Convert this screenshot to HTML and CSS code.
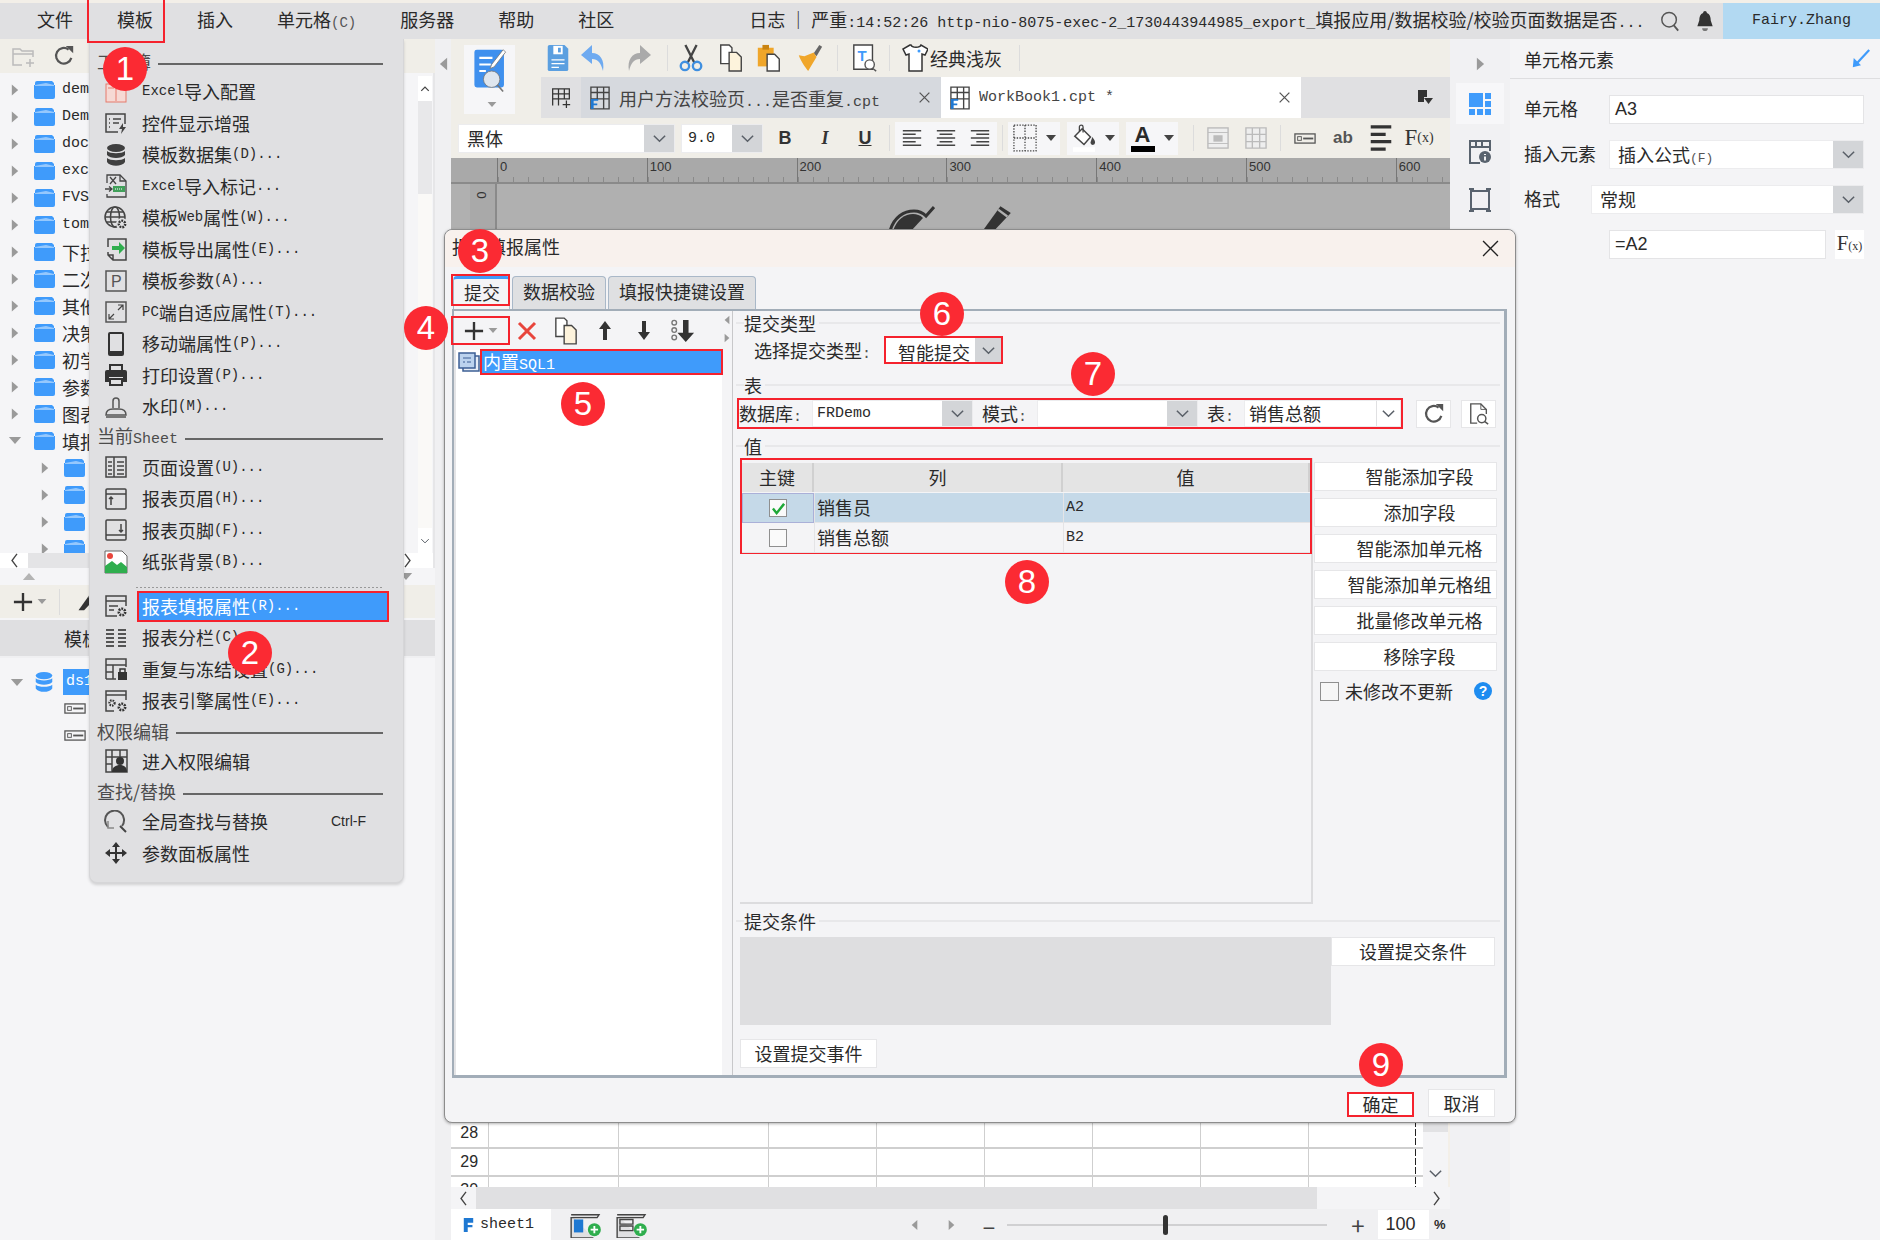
FILE: index.html
```html
<!DOCTYPE html>
<html lang="zh-CN">
<head>
	<meta charset="UTF-8">
	<title>报表填报属性</title>
	<link rel="stylesheet" href="styles.css">
</head>
<body>

<svg class="sprite" xmlns="http://www.w3.org/2000/svg">
	<symbol id="chev" viewBox="0 0 16 16"><path d="M2 5l6 6 6-6" fill="none" stroke="#5a6068" stroke-width="1.6"/></symbol>
	<symbol id="chev-u" viewBox="0 0 16 16"><path d="M2 11l6-6 6 6" fill="none" stroke="#444" stroke-width="2"/></symbol>
	<symbol id="chev-l" viewBox="0 0 10 18"><path d="M8 1L2 9l6 8" fill="none" stroke="#444" stroke-width="1.6"/></symbol>
	<symbol id="chev-r" viewBox="0 0 10 18"><path d="M2 1l6 8-6 8" fill="none" stroke="#444" stroke-width="1.6"/></symbol>
	<symbol id="tri-r" viewBox="0 0 10 16"><path d="M1 1l8 7-8 7z" fill="#9a9a9a"/></symbol>
	<symbol id="tri-l" viewBox="0 0 10 16"><path d="M9 1L1 8l8 7z" fill="#9a9a9a"/></symbol>
	<symbol id="tri-d" viewBox="0 0 16 10"><path d="M1 1l7 8 7-8z" fill="#9a9a9a"/></symbol>
	<symbol id="tri-u" viewBox="0 0 16 10"><path d="M1 9l7-8 7 8z" fill="#b4b4b4"/></symbol>
	<symbol id="folder" viewBox="0 0 21 19"><path d="M1 3q0-2 2-2h15l2 2v2H1z" fill="#3f9bfb"/><path d="M0 5h21v12q0 2-2 2H2q-2 0-2-2z" fill="#3f9bfb"/><path d="M12 3l8 2v1H1V5z" fill="#fff" opacity=".45"/></symbol>
	<symbol id="db" viewBox="0 0 24 24"><g fill="#3f3f3f"><ellipse cx="12" cy="5" rx="9" ry="4"/><path d="M3 8c3 3 15 3 18 0v4c-3 4-15 4-18 0z"/><path d="M3 15c3 3 15 3 18 0v4c-3 5-15 5-18 0z"/></g></symbol>
	<symbol id="db-blue" viewBox="0 0 24 24"><g fill="#3f9bfb"><ellipse cx="12" cy="5" rx="9" ry="4"/><path d="M3 8c3 3 15 3 18 0v4c-3 4-15 4-18 0z"/><path d="M3 15c3 3 15 3 18 0v4c-3 5-15 5-18 0z"/></g></symbol>
	<symbol id="excel-cfg" viewBox="0 0 24 24"><rect x="2" y="4" width="20" height="18" fill="#f6d9d4" stroke="#e57b6d"/><path d="M12 7v14M4 8h6M14 8h6" stroke="#e57b6d"/></symbol>
	<symbol id="ctrl" viewBox="0 0 24 24"><g fill="none" stroke="#444" stroke-width="1.5"><path d="M21 13V3H2v18h12"/><path d="M5 8h1M9 8h8M5 12h1M9 12h6M5 16h1"/></g><path d="M19 12l-4 6h3l-1 5 5-7h-3z" fill="#444"/></symbol>
	<symbol id="xls" viewBox="0 0 24 24"><g fill="none" stroke="#444" stroke-width="1.3"><path d="M3 9V1h13l6 6v16H3v-3"/><path d="M6 3l6 7M12 3l-6 7M16 1v6h6"/><path d="M1 15h6M5 12.500l3 2.500-3 2.500"/></g><rect x="9" y="12" width="12" height="6" fill="#41a05a"/><path d="M11 15h8" stroke="#fff" stroke-dasharray="1 1"/></symbol>
	<symbol id="web" viewBox="0 0 24 24"><g fill="none" stroke="#444" stroke-width="1.500"><circle cx="11" cy="11" r="10"/><ellipse cx="11" cy="11" rx="4.500" ry="10"/><path d="M1 11h20M2 6h18M2 16h18"/></g><circle cx="18" cy="18" r="6" fill="#e0e0e2"/><circle cx="18" cy="18" r="3.200" fill="none" stroke="#333" stroke-width="2.400" stroke-dasharray="1.800 1"/></symbol>
	<symbol id="export" viewBox="0 0 24 24"><path d="M4 10V2h18v21H9l-5-5v-3M9 23v-5H4" fill="none" stroke="#444" stroke-width="1.500"/><path d="M8 9h7V5l6 6-6 6v-4H8z" fill="#2fae4e"/></symbol>
	<symbol id="pbox" viewBox="0 0 24 24"><rect x="2" y="2" width="20" height="20" fill="none" stroke="#555" stroke-width="1.500"/><text x="7" y="18" class="svg-t">P</text></symbol>
	<symbol id="fit" viewBox="0 0 24 24"><rect x="2" y="2" width="20" height="20" fill="none" stroke="#555" stroke-width="1.500"/><path d="M14 5h5v5M19 5l-5 5M5 14v5h5M5 19l5-5" fill="none" stroke="#444" stroke-width="1.200"/></symbol>
	<symbol id="phone" viewBox="0 0 24 24"><rect x="5" y="1" width="14" height="22" rx="1" fill="none" stroke="#333" stroke-width="2"/><path d="M5 19h14v4H5z" fill="#333"/></symbol>
	<symbol id="print" viewBox="0 0 24 24"><path d="M6 7V2h12v5" fill="none" stroke="#333" stroke-width="2"/><path d="M1 9q0-2 2-2h18q2 0 2 2v10h-4v-5H5v5H1z" fill="#333"/><path d="M6 16h12v6H6z" fill="none" stroke="#333" stroke-width="2"/></symbol>
	<symbol id="stamp" viewBox="0 0 24 24"><g fill="none" stroke="#555" stroke-width="1.500"><path d="M9 13V6a3 3 0 1 1 6 0v7"/><path d="M2 20c0-5 3-6 7-6h6c4 0 7 1 7 6z"/></g><path d="M2 22h20" stroke="#777" stroke-width="2"/></symbol>
	<symbol id="pagecols" viewBox="0 0 24 24"><g fill="none" stroke="#444" stroke-width="1.500"><rect x="2" y="2" width="20" height="20"/><path d="M10 2v20M4 7h4M4 11h4M4 15h4M4 19h4M13 7h7M13 11h7M13 15h7M13 19h7"/></g></symbol>
	<symbol id="head" viewBox="0 0 24 24"><g fill="none" stroke="#444" stroke-width="1.500"><rect x="2" y="2" width="20" height="20" rx="1"/><path d="M2 7h20M7 18v-8M5 12l2-2 2 2"/></g></symbol>
	<symbol id="foot" viewBox="0 0 24 24"><g fill="none" stroke="#444" stroke-width="1.500"><rect x="2" y="2" width="20" height="20" rx="1"/><path d="M2 17h20M17 6v8M15 12l2 2 2-2"/></g></symbol>
	<symbol id="paper" viewBox="0 0 24 24"><path d="M1 1h17l5 5v17H1z" fill="#fff" stroke="#666"/><circle cx="6" cy="6" r="3" fill="#e8453c"/><path d="M1 23v-7l7-5 5 4 4-3 6 5v6z" fill="#2fae4e"/></symbol>
	<symbol id="fill" viewBox="0 0 24 24"><g fill="none" stroke="#444" stroke-width="1.500"><path d="M22 12V2H2v20h11M2 7h20M5 12h9M5 16h5"/></g><circle cx="18" cy="18" r="3.200" fill="none" stroke="#333" stroke-width="2.600" stroke-dasharray="1.800 1"/></symbol>
	<symbol id="cols" viewBox="0 0 24 24"><path d="M2 4h8M14 4h8M2 8h8M14 8h8M2 12h8M14 12h8M2 16h8M14 16h8M2 20h8M14 20h8" stroke="#555" stroke-width="1.800"/></symbol>
	<symbol id="freeze" viewBox="0 0 24 24"><g fill="none" stroke="#444" stroke-width="1.500"><path d="M2 22V2h20v8M2 8h20M9 8v14M2 22h10M2 15h7"/></g><rect x="14" y="15" width="9" height="8" fill="#333"/><path d="M16 15v-3h5v3" fill="none" stroke="#333" stroke-width="1.500"/></symbol>
	<symbol id="engine" viewBox="0 0 24 24"><g fill="none" stroke="#444" stroke-width="1.500"><path d="M22 11V2H2v20h8M2 6h20"/></g><circle cx="8" cy="14" r="2.600" fill="none" stroke="#333" stroke-width="2.200" stroke-dasharray="1.500 1"/><circle cx="18" cy="18" r="3.200" fill="none" stroke="#333" stroke-width="2.600" stroke-dasharray="1.800 1"/></symbol>
	<symbol id="perm" viewBox="0 0 24 24"><g fill="none" stroke="#444" stroke-width="1.500"><path d="M2 23V1h21v22zM2 8h21M2 15h6M8 1v22M16 1v7"/></g><circle cx="16" cy="12" r="4" fill="#333"/><path d="M8 23c0-5 4-7 8-7s7 2 7 7z" fill="#333"/></symbol>
	<symbol id="findrep" viewBox="0 0 24 24"><g fill="none" stroke-width="2"><path d="M4 17A9.500 9.500 0 1 1 18 16" stroke="#555"/><path d="M16 16l6 6" stroke="#444"/></g><path d="M4 11v7h6" fill="none" stroke="#888" stroke-width="1.500"/></symbol>
	<symbol id="move" viewBox="0 0 24 24"><path d="M12 1l4 5h-3v5h5V8l5 4-5 4v-3h-5v5h3l-4 5-4-5h3v-5H6v3l-5-4 5-4v3h5V6H8z" fill="#333"/></symbol>
	<symbol id="save" viewBox="0 0 24 30"><path d="M1 3q0-2 2-2h16l4 4v22q0 2-2 2H3q-2 0-2-2z" fill="#5b9fe0"/><rect x="7" y="2" width="10" height="9" fill="#fff"/><rect x="12" y="4" width="3" height="5" fill="#5b9fe0"/><path d="M5 17h14M5 21h14M5 25h8" stroke="#fff" stroke-width="1.500"/></symbol>
	<symbol id="undo" viewBox="0 0 26 28"><path d="M12 1L1 11l11 9v-5c6 0 9 4 11 12 2-11-3-18-11-18z" fill="#6eaaf0"/></symbol>
	<symbol id="redo" viewBox="0 0 26 28"><path d="M14 1l11 10-11 9v-5C8 15 5 19 3 27 1 16 6 9 14 9z" fill="#aaa"/></symbol>
	<symbol id="cut" viewBox="0 0 26 30"><path d="M7 1l10 20M19 1L9 21" stroke="#444" stroke-width="2.500"/><circle cx="6.500" cy="23.500" r="4.500" fill="none" stroke="#3f8fe0" stroke-width="2.500"/><circle cx="19.500" cy="23.500" r="4.500" fill="none" stroke="#3f8fe0" stroke-width="2.500"/></symbol>
	<symbol id="copy" viewBox="0 0 26 30"><path d="M2 1h9l3 3v17H2z" fill="#fff" stroke="#444" stroke-width="1.500"/><path d="M11 9h8l5 5v15H11z" fill="#fdf3dc" stroke="#444" stroke-width="1.500"/></symbol>
	<symbol id="paste" viewBox="0 0 26 30"><path d="M1 4h17v20H1z" fill="#f0a62a"/><rect x="6" y="1" width="7" height="5" fill="#c98310"/><path d="M11 11h8l5 5v13H11z" fill="#fff" stroke="#444" stroke-width="1.500"/></symbol>
	<symbol id="brush" viewBox="0 0 26 30"><path d="M17 10l6-9 3 2-6 10z" fill="#666"/><path d="M1 12l6 1 10-4 3 5-9 15C8 25 3 18 1 12z" fill="#f0a62a"/></symbol>
	<symbol id="tprev" viewBox="0 0 26 30"><path d="M1 1h20v26H1z" fill="#fff" stroke="#444" stroke-width="1.500"/><text x="5" y="18" class="svg-t blue">T</text><circle cx="18" cy="22" r="5" fill="#fff" stroke="#555" stroke-width="1.500"/><path d="M21 26l4 3" stroke="#555" stroke-width="1.500"/></symbol>
	<symbol id="shirt" viewBox="0 0 26 28"><path d="M8 1L1 5l3 6 3-1v17h13V10l3 1 3-6-7-4c-1 3-9 3-10 0z" fill="#fff" stroke="#333" stroke-width="1.500"/><circle cx="17" cy="7" r="1.500" fill="#3f9bfb"/></symbol>
	<symbol id="addsheet" viewBox="0 0 24 26"><path d="M2 22V2h20v12H2M9 2v20M16 2v12M2 8h20" fill="none" stroke="#333" stroke-width="1.500"/><path d="M14 21h9M18.500 16v9" stroke="#333" stroke-width="1.500"/></symbol>
	<symbol id="report" viewBox="0 0 22 26"><path d="M1 1h20v24H1zM1 7h20M1 14h20M8 1v13M15 1v24" fill="none" stroke="#444" stroke-width="1.500"/><path d="M1 14h8v2H4v3h4v2H4v4H1z" fill="#1e78d2"/></symbol>
	<symbol id="x" viewBox="0 0 16 16"><path d="M2 2l12 12M14 2L2 14" stroke="#555" stroke-width="1.600"/></symbol>
	<symbol id="x-dark" viewBox="0 0 16 16"><path d="M1 1l14 14M15 1L1 15" stroke="#222" stroke-width="1.300"/></symbol>
	<symbol id="pin" viewBox="0 0 18 18"><path d="M2 1h9v7H8v5H2z" fill="#333"/><path d="M8 9h9l-4.500 6z" fill="#333"/></symbol>
	<symbol id="bordergrid" viewBox="0 0 26 30"><path d="M1 1h24v28H1zM13 1v28M1 15h24" fill="none" stroke="#444" stroke-width="1.400" stroke-dasharray="1.500 1.500"/></symbol>
	<symbol id="bucket" viewBox="0 0 26 30"><path d="M3 13L11 5l9 9-7 8z" fill="#fff" stroke="#444" stroke-width="1.600"/><path d="M8 8V3a2 2 0 0 1 4 0v6" fill="none" stroke="#444" stroke-width="1.400"/><path d="M22 14c2 3 3 4 3 6a2.500 2.500 0 0 1-5 0z" fill="#444"/><rect x="1" y="25" width="24" height="5" fill="#fff"/></symbol>
	<symbol id="align-l" viewBox="0 0 24 24"><path d="M2 4h20M2 8h14M2 12h20M2 16h14M2 20h20" stroke="#444" stroke-width="1.600"/></symbol>
	<symbol id="align-c" viewBox="0 0 24 24"><path d="M2 4h20M5 8h14M2 12h20M5 16h14M2 20h20" stroke="#444" stroke-width="1.600"/></symbol>
	<symbol id="align-r" viewBox="0 0 24 24"><path d="M2 4h20M8 8h14M2 12h20M8 16h14M2 20h20" stroke="#444" stroke-width="1.600"/></symbol>
	<symbol id="merge" viewBox="0 0 24 24"><rect x="1" y="1" width="22" height="22" fill="#eee" stroke="#bbb" stroke-width="1.500"/><path d="M1 6h22M1 18h22" stroke="#bbb"/><rect x="7" y="9" width="10" height="7" fill="#bbb"/></symbol>
	<symbol id="gridoff" viewBox="0 0 24 24"><path d="M1 1h22v22H1zM1 8h22M1 16h22M8 1v22M16 1v22" fill="#eee" stroke="#bbb" stroke-width="1.500"/></symbol>
	<symbol id="field" viewBox="0 0 24 12"><rect x="1" y="1" width="22" height="10" fill="none" stroke="#555" stroke-width="1.400"/><rect x="4" y="4" width="4" height="4" fill="none" stroke="#555"/><path d="M10 6h11" stroke="#555" stroke-width="2"/></symbol>
	<symbol id="lines" viewBox="0 0 24 30"><path d="M1 3h22M1 11h16M1 19h22M1 27h16" stroke="#333" stroke-width="3.500"/></symbol>
	<symbol id="plus" viewBox="0 0 22 22"><path d="M11 1v20M1 11h20" stroke="#333" stroke-width="2.600"/></symbol>
	<symbol id="del" viewBox="0 0 20 20"><path d="M2 2l16 16M18 2L2 18" stroke="#e8453c" stroke-width="3"/></symbol>
	<symbol id="up" viewBox="0 0 14 21"><path d="M7 1l6 8H9v11H5V9H1z" fill="#333"/></symbol>
	<symbol id="down" viewBox="0 0 14 21"><path d="M7 20l6-8H9V1H5v11H1z" fill="#333"/></symbol>
	<symbol id="bottom" viewBox="0 0 26 26"><circle cx="3.500" cy="4" r="2.500" fill="none" stroke="#777" stroke-width="1.500"/><circle cx="3.500" cy="12" r="2.500" fill="none" stroke="#777" stroke-width="1.500"/><circle cx="3.500" cy="20" r="2.500" fill="none" stroke="#777" stroke-width="1.500"/><path d="M16 25l9-10h-6V1h-6v14H7z" fill="#333"/></symbol>
	<symbol id="sqlitem" viewBox="0 0 22 22"><rect x="5" y="5" width="16" height="15" fill="#e8eef6" stroke="#3c5f95" stroke-width="1.500"/><rect x="1" y="2" width="16" height="15" fill="#bcd3ee" stroke="#3c5f95" stroke-width="1.500"/><path d="M5 7h8M5 11h2M9 11h4" stroke="#3c5f95"/></symbol>
	<symbol id="refresh" viewBox="0 0 24 24"><path d="M20 14A8.500 8.500 0 1 1 17 5" fill="none" stroke="#555" stroke-width="2.400"/><path d="M14 1h8v8z" fill="#555"/></symbol>
	<symbol id="docsearch" viewBox="0 0 24 24"><path d="M10 22H3V1h11l6 6v5" fill="none" stroke="#555" stroke-width="1.500"/><path d="M14 1v6h6" fill="none" stroke="#555"/><circle cx="15" cy="17" r="4.500" fill="none" stroke="#555" stroke-width="1.600"/><path d="M18 20l4 3" stroke="#555" stroke-width="1.600"/></symbol>
	<symbol id="check" viewBox="0 0 14 14"><path d="M1 7l4 5 8-10" fill="none" stroke="#1ea838" stroke-width="2.600"/></symbol>
	<symbol id="search" viewBox="0 0 22 24"><circle cx="10" cy="10" r="8" fill="none" stroke="#555" stroke-width="1.600"/><path d="M15 16l5 6" stroke="#555" stroke-width="2"/></symbol>
	<symbol id="bell" viewBox="0 0 18 24"><path d="M9 1c1 0 2 1 2 2 3 1 4 4 4 8l2 6H1l2-6c0-4 1-7 4-8 0-1 1-2 2-2z" fill="#333"/><path d="M6 19h6c0 4-6 4-6 0z" fill="#777"/></symbol>
	<symbol id="pane-cell" viewBox="0 0 24 24"><path d="M1 1h14v14H1zM17 1h6v6h-6zM17 9h6v6h-6zM1 17h6v6H1zM9 17h6v6H9zM17 17h6v6h-6z" fill="#3f9bfb"/></symbol>
	<symbol id="pane-info" viewBox="0 0 24 24"><path d="M12 23H2V1h20v10M2 7h20M8 1v6M14 1v6" fill="none" stroke="#59636e" stroke-width="2"/><circle cx="17" cy="17" r="6" fill="#59636e"/><path d="M17 14v1M17 16.500v4" stroke="#fff" stroke-width="1.800"/></symbol>
	<symbol id="pane-border" viewBox="0 0 24 24"><rect x="3" y="3" width="18" height="18" fill="none" stroke="#59636e" stroke-width="2"/><path d="M1 1h5M18 1h5M1 23h5M18 23h5" stroke="#59636e" stroke-width="2"/></symbol>
	<symbol id="dock" viewBox="0 0 22 22"><path d="M20 1L7 15" stroke="#3f9bfb" stroke-width="2.400"/><path d="M2 20l1-10 8 8z" fill="#3f9bfb"/></symbol>
	<symbol id="pen" viewBox="0 0 40 56"><rect x="1" y="2" width="36" height="46" rx="3" fill="#3f90ee"/><path d="M7 12h16M7 20h14M7 28h8" stroke="#fff" stroke-width="2.500"/><path d="M36 2l3 3-14 18-5 2 2-5z" fill="#fff" stroke="#777"/><circle cx="22" cy="38" r="10" fill="#dfe6ee" stroke="#777"/><path d="M29 45l7 8" stroke="#777" stroke-width="2"/></symbol>
	<symbol id="sheet-add" viewBox="0 0 34 28"><path d="M1 3h30l-2 3H1v22h24" fill="#e0e0e2" stroke="#444" stroke-width="1.500"/><path d="M4 8h10v14H4z" fill="#1e78d2"/><circle cx="26" cy="19" r="7" fill="#2fae4e"/><path d="M26 15v8M22 19h8" stroke="#fff" stroke-width="2"/></symbol>
	<symbol id="grid-add" viewBox="0 0 34 28"><path d="M1 3h30l-2 3H1v22h24" fill="#e0e0e2" stroke="#444" stroke-width="1.500"/><path d="M4 8h14v5H4zM4 15h14v5H4z" fill="none" stroke="#444" stroke-width="1.500"/><circle cx="26" cy="19" r="7" fill="#2fae4e"/><path d="M26 15v8M22 19h8" stroke="#fff" stroke-width="2"/></symbol>
	<symbol id="tab-f" viewBox="0 0 14 20"><path d="M1 1h12v6H6v3h6v3H6v6H1z" fill="#1e78d2"/></symbol>
	<symbol id="eyeoff" viewBox="0 0 46 26"><path d="M1 26C5 12 15 6 25 6c5 0 9 2 12 5L45 2" fill="none" stroke="#333" stroke-width="3"/><path d="M4 26C8 14 16 9 24 9c4 0 7 1 10 4L22 26z" fill="#333"/></symbol>
	<symbol id="pencil" viewBox="0 0 32 26"><path d="M22 1l9 6-18 19H4z" fill="#333"/><path d="M20 4l8 6" stroke="#b0b0b0" stroke-width="2"/></symbol>
</svg>

<div class="app">

	<header class="topbar">
		<nav class="mainmenu">
			<span>文件</span>
			<span class="cur">模板</span>
			<span>插入</span>
			<span>单元格<i class="en pale">(C)</i></span>
			<span>服务器</span>
			<span>帮助</span>
			<span>社区</span>
		</nav>
		<div class="logline">日志 ｜ 严重<i class="en">:14:52:26 http-nio-8075-exec-2_1730443944985_export_</i>填报应用/数据校验/校验页面数据是否<i class="en">...</i></div>
		<svg class="top-search"><use href="#search"/></svg>
		<svg class="top-bell"><use href="#bell"/></svg>
		<div class="user en">Fairy.Zhang</div>
	</header>

	<div class="main">

		<aside class="left">
			<div class="strip34">
				<svg class="i-newdir" viewBox="0 0 24 22"><path d="M10 20H1V4h7l2 2h11v6M1 9h20M18 14v8M14 18h8" fill="none" stroke="#bbb" stroke-width="1.500"/></svg>
				<svg class="i22"><use href="#refresh"/></svg>
			</div>
			<div class="tree">
				<ul class="tree-list">
					<li><svg class="t-arrow"><use href="#tri-r"/></svg><svg class="t-dir"><use href="#folder"/></svg><span class="en">dem</span></li>
					<li><svg class="t-arrow"><use href="#tri-r"/></svg><svg class="t-dir"><use href="#folder"/></svg><span class="en">Dem</span></li>
					<li><svg class="t-arrow"><use href="#tri-r"/></svg><svg class="t-dir"><use href="#folder"/></svg><span class="en">doc</span></li>
					<li><svg class="t-arrow"><use href="#tri-r"/></svg><svg class="t-dir"><use href="#folder"/></svg><span class="en">exc</span></li>
					<li><svg class="t-arrow"><use href="#tri-r"/></svg><svg class="t-dir"><use href="#folder"/></svg><span class="en">FVS</span></li>
					<li><svg class="t-arrow"><use href="#tri-r"/></svg><svg class="t-dir"><use href="#folder"/></svg><span class="en">tom</span></li>
					<li><svg class="t-arrow"><use href="#tri-r"/></svg><svg class="t-dir"><use href="#folder"/></svg><span>下拉</span></li>
					<li><svg class="t-arrow"><use href="#tri-r"/></svg><svg class="t-dir"><use href="#folder"/></svg><span>二次</span></li>
					<li><svg class="t-arrow"><use href="#tri-r"/></svg><svg class="t-dir"><use href="#folder"/></svg><span>其他</span></li>
					<li><svg class="t-arrow"><use href="#tri-r"/></svg><svg class="t-dir"><use href="#folder"/></svg><span>决策</span></li>
					<li><svg class="t-arrow"><use href="#tri-r"/></svg><svg class="t-dir"><use href="#folder"/></svg><span>初学</span></li>
					<li><svg class="t-arrow"><use href="#tri-r"/></svg><svg class="t-dir"><use href="#folder"/></svg><span>参数</span></li>
					<li><svg class="t-arrow"><use href="#tri-r"/></svg><svg class="t-dir"><use href="#folder"/></svg><span>图表</span></li>
					<li><svg class="t-arrow down"><use href="#tri-d"/></svg><svg class="t-dir"><use href="#folder"/></svg><span>填报</span></li>
					<li class="sub"><svg class="t-arrow"><use href="#tri-r"/></svg><svg class="t-dir"><use href="#folder"/></svg></li>
					<li class="sub"><svg class="t-arrow"><use href="#tri-r"/></svg><svg class="t-dir"><use href="#folder"/></svg></li>
					<li class="sub"><svg class="t-arrow"><use href="#tri-r"/></svg><svg class="t-dir"><use href="#folder"/></svg></li>
					<li class="sub"><svg class="t-arrow"><use href="#tri-r"/></svg><svg class="t-dir"><use href="#folder"/></svg></li>
				</ul>
				<div class="tree-vs">
					<div class="vs-btn"><svg class="i-vs"><use href="#chev-u"/></svg></div>
					<div class="vs-thumb"></div>
					<div class="vs-track"></div>
					<div class="vs-btn"><svg class="i-vs"><use href="#chev"/></svg></div>
				</div>
			</div>
			<div class="tree-hs"><span class="hs-btn"><svg class="i-hs"><use href="#chev-l"/></svg></span><span class="hs-bar"></span><span class="hs-btn wide"><svg class="i-hs"><use href="#chev-r"/></svg></span></div>
			<div class="left-split"><svg class="tri-sm"><use href="#tri-u"/></svg><svg class="tri-sm"><use href="#tri-d"/></svg></div>
			<div class="strip33">
				<svg class="i20"><use href="#plus"/></svg><svg class="tri-xs"><use href="#tri-d"/></svg><i class="v-sep"></i>
				<svg class="i20"><use href="#pencil"/></svg>
			</div>
			<div class="left-head">模板数据集</div>
			<div class="dstree">
				<div class="ds-row"><svg class="t-arrow down"><use href="#tri-d"/></svg><svg class="i22"><use href="#db-blue"/></svg><span class="ds-name en">ds1</span></div>
				<div class="ds-child"><svg class="i-field"><use href="#field"/></svg></div>
				<div class="ds-child"><svg class="i-field"><use href="#field"/></svg></div>
			</div>
		</aside>

		<section class="mid">
			<div class="gutter"><svg class="i-tri"><use href="#tri-l"/></svg></div>
			<div class="work">
				<div class="tophead">
					<div class="bigtool"><svg class="i-pen"><use href="#pen"/></svg><svg class="tri-xs"><use href="#tri-d"/></svg></div>
					<div class="topcols">
						<div class="row1">
							<svg class="i-t1"><use href="#save"/></svg>
							<svg class="i-t1"><use href="#undo"/></svg>
							<svg class="i-t1"><use href="#redo"/></svg>
							<i class="v-sep"></i>
							<svg class="i-t1"><use href="#cut"/></svg>
							<svg class="i-t1"><use href="#copy"/></svg>
							<svg class="i-t1"><use href="#paste"/></svg>
							<svg class="i-t1"><use href="#brush"/></svg>
							<i class="v-sep"></i>
							<svg class="i-t1"><use href="#tprev"/></svg>
							<i class="v-sep"></i>
							<div class="theme"><svg class="i-t1"><use href="#shirt"/></svg>经典浅灰</div>
							<i class="v-sep"></i>
						</div>
						<div class="row2">
							<div class="tab-add"><svg class="i-t2"><use href="#addsheet"/></svg></div>
							<div class="filetab"><svg class="i-t2"><use href="#report"/></svg><span class="ftxt">用户方法校验页<i class="en">...</i>是否重复<i class="en">.cpt</i></span><svg class="i-x"><use href="#x"/></svg></div>
							<div class="filetab on"><svg class="i-t2"><use href="#report"/></svg><span class="ftxt en">WorkBook1.cpt *</span><svg class="i-x"><use href="#x"/></svg></div>
							<div class="tab-rest"><svg class="i-pin"><use href="#pin"/></svg></div>
						</div>
					</div>
				</div>
				<div class="row3">
					<div class="sel fontsel"><span class="sel-txt">黑体</span><span class="sel-btn"><svg class="i-chev"><use href="#chev"/></svg></span></div>
					<div class="sel sizesel"><span class="sel-txt en">9.0</span><span class="sel-btn"><svg class="i-chev"><use href="#chev"/></svg></span></div>
					<span class="fmt b">B</span>
					<span class="fmt i">I</span>
					<span class="fmt u">U</span>
					<i class="v-sep"></i>
					<div class="fmtgroup">
						<svg class="i-t3"><use href="#align-l"/></svg>
						<svg class="i-t3"><use href="#align-c"/></svg>
						<svg class="i-t3"><use href="#align-r"/></svg>
					</div>
					<i class="v-sep"></i>
					<div class="fmtgroup drop"><svg class="i-t3 tall"><use href="#bordergrid"/></svg><i class="caret"></i></div>
					<div class="fmtgroup drop"><svg class="i-t3 tall"><use href="#bucket"/></svg><i class="caret"></i></div>
					<div class="fmtgroup drop"><span class="font-a">A</span><i class="caret"></i></div>
					<i class="v-sep"></i>
					<span class="fmt"><svg class="i-t3"><use href="#merge"/></svg></span>
					<span class="fmt"><svg class="i-t3"><use href="#gridoff"/></svg></span>
					<i class="v-sep"></i>
					<span class="fmt"><svg class="i-field"><use href="#field"/></svg></span>
					<span class="fmt ab">ab</span>
					<span class="fmt"><svg class="i-t3 tall"><use href="#lines"/></svg></span>
					<span class="fmt fx">F<small>(x)</small></span>
				</div>
				<div class="ruler">
					<div class="ruler-corner"></div>
					<div class="ruler-cell">0</div>
					<div class="ruler-cell">100</div>
					<div class="ruler-cell">200</div>
					<div class="ruler-cell">300</div>
					<div class="ruler-cell">400</div>
					<div class="ruler-cell">500</div>
					<div class="ruler-cell">600</div>
				</div>
				<div class="stage">
					<div class="vruler"><span>0</span></div>
					<div class="stage-body">
						<svg class="i-eye"><use href="#eyeoff"/></svg>
						<svg class="i-pencil"><use href="#pencil"/></svg>
					</div>
				</div>
				<div class="sheet-wrap">
					<table class="sheet">
						<tr><th>28</th><td></td><td></td><td></td><td></td><td></td><td></td><td></td><td class="last"></td></tr>
						<tr><th>29</th><td></td><td></td><td></td><td></td><td></td><td></td><td></td><td class="last"></td></tr>
						<tr><th>30</th><td></td><td></td><td></td><td></td><td></td><td></td><td></td><td class="last"></td></tr>
					</table>
					<div class="sheet-vs"><div class="sv-thumb"></div><svg class="i-chev"><use href="#chev"/></svg></div>
				</div>
				<div class="sheet-hs"><span class="hs-btn"><svg class="i-hs"><use href="#chev-l"/></svg></span><span class="hs-bar"></span><span class="hs-btn"><svg class="i-hs"><use href="#chev-r"/></svg></span></div>
				<div class="sheetbar">
					<div class="sheet-tab"><svg class="i-tabf"><use href="#tab-f"/></svg><span class="en">sheet1</span></div>
					<svg class="i-add"><use href="#sheet-add"/></svg>
					<svg class="i-add"><use href="#grid-add"/></svg>
					<svg class="nav-tri first"><use href="#tri-l"/></svg>
					<svg class="nav-tri"><use href="#tri-r"/></svg>
					<span class="zoom-sign">–</span>
					<div class="slider"><i></i></div>
					<span class="zoom-sign">+</span>
					<div class="zoom-val">100</div>
					<span class="zoom-pct">%</span>
				</div>
			</div>
		</section>

		<div class="panes">
			<svg class="i-tri"><use href="#tri-r"/></svg>
			<div class="pane-btn on"><svg class="i-t3 wide"><use href="#pane-cell"/></svg></div>
			<div class="pane-btn"><svg class="i-t3 wide"><use href="#pane-info"/></svg></div>
			<div class="pane-btn"><svg class="i-t3 wide"><use href="#pane-border"/></svg></div>
		</div>

		<aside class="props">
			<div class="props-head">单元格元素<svg class="i20"><use href="#dock"/></svg></div>
			<div class="props-body">
				<div class="p-row"><label>单元格</label><div class="p-inp">A3</div></div>
				<div class="p-row"><label>插入元素</label><div class="sel"><span class="sel-txt">插入公式<i class="en pale">(F)</i></span><span class="sel-btn"><svg class="i-chev"><use href="#chev"/></svg></span></div></div>
				<div class="p-row short"><label>格式</label><div class="sel"><span class="sel-txt">常规</span><span class="sel-btn"><svg class="i-chev"><use href="#chev"/></svg></span></div></div>
				<div class="p-row"><label></label><div class="p-inp">=A2</div><span class="p-fx fx">F<small>(x)</small></span></div>
			</div>
		</aside>
	</div>

	<!-- 模板菜单 -->
	<ul class="dropmenu">
		<li class="m-title"><span>工作簿</span></li>
		<li class="mi"><svg><use href="#excel-cfg"/></svg><span class="m-txt"><i class="en">Excel</i>导入配置</span></li>
		<li class="mi"><svg><use href="#ctrl"/></svg><span class="m-txt">控件显示增强</span></li>
		<li class="mi"><svg><use href="#db"/></svg><span class="m-txt">模板数据集<i class="en">(D)...</i></span></li>
		<li class="mi"><svg><use href="#xls"/></svg><span class="m-txt"><i class="en">Excel</i>导入标记<i class="en">...</i></span></li>
		<li class="mi"><svg><use href="#web"/></svg><span class="m-txt">模板<i class="en">Web</i>属性<i class="en">(W)...</i></span></li>
		<li class="mi"><svg><use href="#export"/></svg><span class="m-txt">模板导出属性<i class="en">(E)...</i></span></li>
		<li class="mi"><svg><use href="#pbox"/></svg><span class="m-txt">模板参数<i class="en">(A)...</i></span></li>
		<li class="mi"><svg><use href="#fit"/></svg><span class="m-txt"><i class="en">PC</i>端自适应属性<i class="en">(T)...</i></span></li>
		<li class="mi"><svg><use href="#phone"/></svg><span class="m-txt">移动端属性<i class="en">(P)...</i></span></li>
		<li class="mi"><svg><use href="#print"/></svg><span class="m-txt">打印设置<i class="en">(P)...</i></span></li>
		<li class="mi"><svg><use href="#stamp"/></svg><span class="m-txt">水印<i class="en">(M)...</i></span></li>
		<li class="m-title"><span>当前<i class="en">Sheet</i></span></li>
		<li class="mi"><svg><use href="#pagecols"/></svg><span class="m-txt">页面设置<i class="en">(U)...</i></span></li>
		<li class="mi"><svg><use href="#head"/></svg><span class="m-txt">报表页眉<i class="en">(H)...</i></span></li>
		<li class="mi"><svg><use href="#foot"/></svg><span class="m-txt">报表页脚<i class="en">(F)...</i></span></li>
		<li class="mi"><svg><use href="#paper"/></svg><span class="m-txt">纸张背景<i class="en">(B)...</i></span></li>
		<li class="m-dash"></li>
		<li class="mi on"><svg><use href="#fill"/></svg><span class="m-txt">报表填报属性<i class="en">(R)...</i></span></li>
		<li class="mi"><svg><use href="#cols"/></svg><span class="m-txt">报表分栏<i class="en">(C)...</i></span></li>
		<li class="mi"><svg><use href="#freeze"/></svg><span class="m-txt">重复与冻结设置<i class="en">(G)...</i></span></li>
		<li class="mi"><svg><use href="#engine"/></svg><span class="m-txt">报表引擎属性<i class="en">(E)...</i></span></li>
		<li class="m-title"><span>权限编辑</span></li>
		<li class="mi"><svg><use href="#perm"/></svg><span class="m-txt">进入权限编辑</span></li>
		<li class="m-title"><span>查找/替换</span></li>
		<li class="mi"><svg><use href="#findrep"/></svg><span class="m-txt">全局查找与替换<b class="short-key">Ctrl-F</b></span></li>
		<li class="mi"><svg><use href="#move"/></svg><span class="m-txt">参数面板属性</span></li>
	</ul>

	<!-- 报表填报属性 弹窗 -->
	<div class="dialog">
		<div class="dlg-title">报表填报属性<svg class="dlg-x"><use href="#x-dark"/></svg></div>
		<div class="dlg-tabs">
			<span class="dtab on">提交</span>
			<span class="dtab">数据校验</span>
			<span class="dtab">填报快捷键设置</span>
		</div>
		<div class="dlg-panel">
			<div class="sql-col">
				<div class="sql-tools">
					<span class="tool-add"><svg class="i20"><use href="#plus"/></svg><svg class="tri-xs"><use href="#tri-d"/></svg></span>
					<svg class="i-del"><use href="#del"/></svg>
					<svg class="i-t3 tall"><use href="#copy"/></svg>
					<svg class="i-arrow"><use href="#up"/></svg>
					<svg class="i-arrow"><use href="#down"/></svg>
					<svg class="i-t3 tall"><use href="#bottom"/></svg>
				</div>
				<div class="sql-list">
					<div class="sql-item"><svg class="i22"><use href="#sqlitem"/></svg><span class="sql-name">内置<i class="en">SQL1</i></span></div>
				</div>
			</div>
			<div class="split-col"><svg class="tri-mini"><use href="#tri-l"/></svg><svg class="tri-mini"><use href="#tri-r"/></svg></div>
			<div class="form-col">
				<div class="legend l1"><span>提交类型</span></div>
				<div class="type-row">
					<label>选择提交类型<i class="en pale">:</i></label>
					<div class="sel typesel"><span class="sel-txt">智能提交</span><span class="sel-btn"><svg class="i-chev"><use href="#chev"/></svg></span></div>
				</div>
				<div class="legend l2"><span>表</span></div>
				<div class="db-line">
					<div class="db-row">
						<label class="lb-db">数据库<i class="en pale">:</i></label>
						<div class="sel"><span class="sel-txt en">FRDemo</span><span class="sel-btn"><svg class="i-chev"><use href="#chev"/></svg></span></div>
						<label class="lb-mode">模式<i class="en pale">:</i></label>
						<div class="sel"><span class="sel-txt"></span><span class="sel-btn"><svg class="i-chev"><use href="#chev"/></svg></span></div>
						<label class="lb-tbl">表<i class="en pale">:</i></label>
						<div class="sel plainbtn"><span class="sel-txt">销售总额</span><span class="sel-btn"><svg class="i-chev"><use href="#chev"/></svg></span></div>
					</div>
					<span class="icon-btn first"><svg class="i22"><use href="#refresh"/></svg></span>
					<span class="icon-btn"><svg class="i22"><use href="#docsearch"/></svg></span>
				</div>
				<div class="legend l3"><span>值</span></div>
				<div class="val-block">
					<div class="val-left">
						<div class="val-table">
							<div class="vt-head"><span>主键</span><span>列</span><span>值</span></div>
							<div class="vt-row sel-row">
								<span class="vt-chk cur"><i class="chk"><svg><use href="#check"/></svg></i></span><span class="vt-c">销售员</span><span class="vt-c en">A2</span>
							</div>
							<div class="vt-row">
								<span class="vt-chk"><i class="chk"></i></span><span class="vt-c">销售总额</span><span class="vt-c en">B2</span>
							</div>
						</div>
					</div>
					<div class="val-btns">
						<button>智能添加字段</button>
						<button>添加字段</button>
						<button>智能添加单元格</button>
						<button>智能添加单元格组</button>
						<button>批量修改单元格</button>
						<button>移除字段</button>
						<div class="noupd"><i class="chk big"></i><span>未修改不更新</span><b class="help">?</b></div>
					</div>
				</div>
				<div class="legend l4"><span>提交条件</span></div>
				<div class="cond">
					<div class="cond-box"></div>
					<button>设置提交条件</button>
				</div>
				<button class="evt-btn">设置提交事件</button>
			</div>
		</div>
		<div class="dlg-foot">
			<button class="ok">确定</button>
			<button>取消</button>
		</div>
	</div>

	<!-- 步骤序号 -->
	<span class="badge b1">1</span>
	<span class="badge b2">2</span>
	<span class="badge b3">3</span>
	<span class="badge b4">4</span>
	<span class="badge b5">5</span>
	<span class="badge b6">6</span>
	<span class="badge b7">7</span>
	<span class="badge b8">8</span>
	<span class="badge b9">9</span>
</div>

</body>
</html>
```

FILE: styles.css
```css
*{margin:0;padding:0;box-sizing:border-box;}
html,body{width:1880px;height:1240px;overflow:hidden;}
body{font-family:"Noto Sans CJK SC","Liberation Sans",sans-serif;font-size:18px;color:#2a2a2a;background:#f4f4f6;}
i,b{font-style:normal;font-weight:normal;}
ul{list-style:none;}
svg{display:block;flex:none;}
.sprite{display:none;}
.svg-t{font-family:"Liberation Sans",sans-serif;font-size:16px;fill:#555;}
.svg-t.blue{fill:#3f9bfb;font-weight:bold;}
.en{font-family:"Liberation Mono",monospace;font-size:15px;}
.pale{color:#555;}
button{font-family:inherit;font-size:18px;color:#2a2a2a;background:#fff;border:1px solid #e6e6e8;height:29px;line-height:25px;}

.app{position:relative;width:1880px;height:1240px;overflow:hidden;padding-top:3px;background:#f3efe8;}

/* 顶部菜单 */
.topbar{position:relative;z-index:6;display:flex;align-items:center;height:36px;background:#e0e0e2;}
.mainmenu{display:flex;gap:44px;padding-left:37px;line-height:36px;}
.mainmenu .cur{position:relative;}
.mainmenu .cur::after{content:"";position:absolute;left:-30px;right:-12px;top:-3px;bottom:-2px;border:2px solid #f5222d;}
.mainmenu .en{font-size:14px;}
.logline{flex:1;margin-left:135px;white-space:nowrap;overflow:hidden;line-height:36px;}
.top-search{width:20px;height:23px;margin-right:16px;}
.top-bell{width:18px;height:23px;margin-right:9px;}
.user{width:157px;height:36px;line-height:36px;background:#b2d9f2;text-align:center;}

.main{display:flex;height:1201px;}

/* 左侧 */
.left{width:437px;display:flex;flex-direction:column;background:#f5f5f7;border-right:2px solid #f0f0f2;}
.strip34{height:34px;display:flex;align-items:center;gap:17px;padding-left:12px;background:#f0eee8;}
.i-newdir{width:24px;height:22px;}
.i22{width:22px;height:22px;}
.i20{width:20px;height:20px;}
.tree{height:480px;display:flex;padding-top:3px;border-right:2px solid #e6e6e8;}
.tree-list{flex:1;overflow:hidden;}
.tree-list li{height:27px;display:flex;align-items:center;padding-left:11px;white-space:nowrap;}
.tree-list li.sub{padding-left:41px;}
.t-arrow{width:8px;height:14px;margin-right:15px;}
.t-arrow.down{width:14px;height:9px;margin:0 12px 0 -3px;}
.t-dir{width:21px;height:19px;margin-right:7px;}
.tree-vs{width:14px;margin:0 1px 0 0;display:flex;flex-direction:column;}
.vs-btn{height:25px;background:#fff;display:flex;align-items:center;justify-content:center;}
.i-vs{width:10px;height:10px;}
.vs-thumb{height:93px;background:#e8e8ea;}
.vs-track{flex:1;background:#faf9f7;}
.tree-hs{height:15px;display:flex;align-items:center;background:#fff;border-right:2px solid #e6e6e8;}
.tree-hs .hs-bar{flex:1;height:15px;background:#e4e4e6;}
.hs-btn{width:28px;display:flex;align-items:center;justify-content:center;}
.hs-btn.wide{width:31px;justify-content:flex-start;padding-left:1px;}
.i-hs{width:9px;height:15px;}
.left-split{height:17px;display:flex;justify-content:space-between;align-items:center;padding:0 22px 0 22px;}
.tri-sm{width:14px;height:9px;}
.strip33{height:33px;display:flex;align-items:center;padding-left:13px;background:#f0eee8;}
.tri-xs{width:10px;height:7px;margin-left:4px;}
.v-sep{display:block;width:1px;height:26px;background:#dcdcdc;flex:none;}
.strip33 .v-sep{margin:0 16px 0 12px;}
.left-head{height:36px;margin-top:2px;line-height:36px;padding-left:64px;background:#dfdfe1;}
.dstree{flex:1;padding-top:11px;border-top:2px solid #f0f0f2;}
.ds-row{height:26px;display:flex;align-items:center;padding-left:10px;}
.ds-row .i22{margin-right:6px;}
.ds-row .t-arrow.down{margin:0 9px 0 0;}
.ds-name{width:60px;height:26px;line-height:26px;margin-left:2px;padding-left:3px;background:#3f9bfb;color:#fff;}
.ds-child{height:27px;display:flex;align-items:center;padding-left:64px;}
.i-field{width:22px;height:11px;}

/* 中间 */
.mid{width:1013px;display:flex;}
.gutter{width:14px;background:#f0f0f2;padding:17px 0 0 2px;}
.i-tri{width:9px;height:16px;}
.work{flex:1;display:flex;flex-direction:column;min-width:0;}
.tophead{display:flex;height:79px;background:#f0eee8;}
.bigtool{width:51px;height:69px;margin:6px 26px 0 13px;background:#f6f6f8;display:flex;flex-direction:column;align-items:center;padding-top:3px;}
.i-pen{width:34px;height:46px;margin-bottom:7px;}
.topcols{flex:1;min-width:0;}
.row1{height:38px;display:grid;align-items:center;justify-items:center;grid-template-columns:34px 36px 56px 1px 46px 34px 42px 40px 14px 42px 6px 127px 1px;}
.i-t1{width:26px;height:28px;}
.theme{display:flex;align-items:center;gap:2px;justify-self:start;padding-left:10px;}
.row2{height:41px;display:flex;background:#e0e0e2;}
.tab-add{width:40px;display:flex;align-items:center;justify-content:center;}
.i-t2{width:20px;height:26px;}
.filetab{width:360px;display:flex;align-items:center;padding:0 10px 0 9px;background:#d6d9de;}
.filetab.on{background:#fff;}
.ftxt{flex:1;margin-left:9px;white-space:nowrap;overflow:hidden;color:#444;}
.i-x{width:13px;height:13px;}
.tab-rest{flex:1;display:flex;align-items:center;justify-content:flex-end;padding-right:16px;}
.i-pin{width:18px;height:18px;}

.row3{height:40px;display:flex;align-items:center;padding-left:7px;background:#f0eee8;}
.sel{display:flex;align-items:stretch;background:#fff;border:1px solid #ececee;flex:none;}
.sel-txt{flex:1;padding-left:8px;white-space:nowrap;overflow:hidden;}
.sel-btn{width:30px;background:#d3d5d8;display:flex;align-items:center;justify-content:center;}
.i-chev{width:15px;height:15px;}
.fontsel{width:217px;height:29px;line-height:27px;}
.sizesel{width:82px;height:29px;line-height:27px;margin-left:6px;}
.sizesel .sel-txt{padding-left:6px;}
.fmt{width:38px;text-align:center;display:flex;align-items:center;justify-content:center;flex:none;font-family:"Liberation Sans",sans-serif;color:#333;}
.fmt.b{font-weight:bold;margin-left:3px;}
.fmt.i{font-style:italic;font-family:"Liberation Serif",serif;font-weight:bold;margin:0 2px;}
.fmt.u{text-decoration:underline;font-weight:bold;}
.row3 .v-sep{margin:0 5px;}
.fmtgroup{display:flex;align-items:center;justify-content:space-around;height:33px;width:102px;background:#f6f6f8;flex:none;}
.fmtgroup.drop{width:52px;margin-right:7px;}
.row3 .fmtgroup.drop + .v-sep{margin-left:8px;}
.i-t3{width:22px;height:22px;}
.i-t3.tall{width:24px;height:28px;}
.i-arrow{width:14px;height:21px;}
.caret{width:0;height:0;border-left:5px solid transparent;border-right:5px solid transparent;border-top:6px solid #444;}
.font-a{font-family:"Liberation Sans",sans-serif;font-weight:bold;font-size:22px;line-height:22px;border-bottom:6px solid #000;width:24px;text-align:center;}
.ab{font-weight:bold;font-size:17px;color:#555;}
.fx{font-family:"Liberation Serif",serif;font-size:23px;color:#333;}
.fx small{font-size:14px;}

.ruler{height:26px;display:flex;background:#a9a9a9;border-bottom:2px solid #8a8a8a;}
.ruler-corner{width:46px;flex:none;}
.ruler-cell{width:149.8px;flex:none;padding-left:2px;font-family:"Liberation Sans",sans-serif;font-size:13px;line-height:17px;color:#333;border-left:1px solid #777;background:repeating-linear-gradient(90deg,#8a8a8a 0 1px,transparent 1px 15px) left bottom/100% 5px no-repeat;}
.stage{flex:1;display:flex;background:#b0b0b0;min-height:0;}
.vruler{width:27px;margin-left:19px;background:#a9a9a9;border-right:2px solid #8a8a8a;font-size:13px;color:#333;}
.vruler span{display:block;margin:4px 0 0 7px;transform:rotate(90deg);width:8px;font-family:"Liberation Sans",sans-serif;}
.stage-body{flex:1;display:flex;justify-content:center;align-items:flex-start;gap:40px;padding:21px 46px 0 0;}
.i-eye{width:46px;height:26px;}
.i-pencil{width:37px;height:30px;}

.sheet-wrap{height:68px;display:flex;overflow:hidden;}
.sheet{width:972px;table-layout:fixed;border-collapse:collapse;background:#fff;flex:none;}
.sheet tr{height:28px;}
.sheet th{width:37px;font-weight:normal;font-size:16px;font-family:"Liberation Sans",sans-serif;border-bottom:2px solid #cfcfcf;}
.sheet td{border:1px solid #cfcfcf;border-bottom-width:2px;width:108px;}
.sheet td:first-of-type{width:130px;}
.sheet td:nth-of-type(2){width:150px;}
.sheet td.last{width:115px;border-right:0;background:repeating-linear-gradient(#222 0 7px,transparent 7px 9px) 106px 0/1px 100% no-repeat;}
.sheet-vs{width:25px;background:#f4f4f6;display:flex;flex-direction:column;align-items:center;padding:0 0 6px;justify-content:space-between;}
.sv-thumb{width:100%;height:13px;background:#e2e2e4;}
.sheet-hs{height:22px;display:flex;align-items:center;background:#f4f4f6;}
.sheet-hs .hs-btn{width:25px;}
.sheet-hs .hs-bar{width:841px;height:22px;background:#e0e0e2;}
.sheet-hs .hs-btn:last-child{margin-left:107px;}
.sheetbar{height:31px;display:flex;align-items:center;background:#f0f0f2;}
.sheet-tab{width:100px;height:31px;display:flex;align-items:center;gap:6px;padding-left:12px;background:#fff;}
.i-tabf{width:11px;height:18px;}
.i-add{width:34px;height:26px;margin-left:18px;}
.i-add + .i-add{margin-left:12px;}
.nav-tri{width:7px;height:14px;margin-left:30px;}
.nav-tri.first{margin-left:262px;}
.zoom-sign{width:24px;text-align:center;font-size:24px;color:#444;margin-left:22px;line-height:30px;}
.slider{width:320px;height:2px;background:#d0d0d2;position:relative;margin-left:6px;}
.slider i{position:absolute;left:156px;top:-9px;width:5px;height:20px;border-radius:3px;background:#333;}
.slider + .zoom-sign{margin-left:19px;}
.zoom-val{width:51px;height:29px;margin-left:8px;padding-right:6px;background:#fff;text-align:center;font-family:"Liberation Sans",sans-serif;line-height:29px;}
.zoom-pct{margin-left:5px;font-family:"Liberation Sans",sans-serif;font-size:13px;font-weight:bold;}

/* 右侧 */
.panes{width:60px;background:#f1f1f3;display:flex;flex-direction:column;align-items:center;padding-top:17px;}
.panes .i-tri{margin-bottom:11px;}
.pane-btn{width:48px;height:41px;display:flex;align-items:center;justify-content:center;margin-bottom:7px;}
.pane-btn.on{background:#f7f7f9;}
.i-t3.wide{width:24px;height:24px;}
.props{flex:1;min-width:0;background:#f4f4f6;}
.props-head{height:40px;display:flex;align-items:center;justify-content:space-between;padding:0 9px 0 14px;border-bottom:1px solid #dedee0;}
.props-body{padding:16px 16px 0 14px;display:flex;flex-direction:column;gap:16px;}
.p-row{display:flex;height:29px;line-height:27px;}
.p-row label{width:85px;flex:none;}
.p-row.short label{width:67px;}
.p-row .sel{flex:1;}
.p-inp{flex:1;background:#fff;border:1px solid #e4e4e6;padding-left:5px;font-family:"Liberation Sans",sans-serif;}
.p-fx{width:29px;margin-left:9px;background:#fff;text-align:center;font-size:21px;}
.p-fx small{font-size:12px;}
.p-row .en{font-size:13px;}

/* 菜单 */
.dropmenu{position:absolute;left:89px;top:39px;width:315px;height:844px;padding-top:8px;background:#e0e0e2;border:1px solid #d6d6d8;border-top:0;border-radius:0 0 8px 8px;box-shadow:0 2px 3px rgba(0,0,0,.15);z-index:5;}
.m-title{height:29px;display:flex;align-items:center;padding:0 20px 0 7px;color:#4c4c4c;line-height:29px;}
.m-title::after{content:"";flex:1;height:2px;margin:4px 0 0 7px;background:#666;}
.m-dash{height:13px;margin:0 20px 0 46px;background:linear-gradient(90deg,#999 50%,transparent 50%) 0 9px/4px 1px repeat-x;}
.mi{height:31.5px;display:flex;align-items:center;padding:0 14px 0 14px;line-height:31.5px;}
.mi svg{width:24px;height:24px;}
.m-txt{flex:1;display:flex;margin-left:9px;padding-left:5px;white-space:nowrap;}
.m-txt .en{font-size:14px;}
.mi.on .m-txt{background:#3f9bfb;color:#fff;outline:2px solid #f5222d;outline-offset:-2px;}
.short-key{margin-left:auto;padding-right:23px;font-family:"Liberation Sans",sans-serif;font-size:14px;}

/* 弹窗 */
.dialog{position:absolute;left:444px;top:229px;width:1072px;height:894px;background:#f4f4f6;border:1px solid #8c8c8c;border-radius:8px;box-shadow:0 1px 3px rgba(0,0,0,.3);z-index:6;}
.dlg-title{height:37px;display:flex;align-items:center;justify-content:space-between;padding:0 16px 6px 7px;background:#f8f1ed;border-radius:8px 8px 0 0;}
.dlg-x{width:17px;height:17px;margin-top:6px;}
.dlg-tabs{display:flex;gap:2px;height:33px;margin:9px 0 0 8px;}
.dtab{position:relative;padding:0 10px;height:33px;line-height:29px;white-space:nowrap;background:#dfe0e2;border:1px solid #a9b8c8;border-bottom:0;border-radius:4px 4px 0 0;}
.dtab.on{width:57px;background:#f4f4f6;border-top:3px solid #3f9bfb;line-height:27px;}
.dtab.on::after{content:"";position:absolute;left:-3px;right:-1px;top:-5px;bottom:3px;border:2px solid #f5222d;}
.dlg-panel{display:flex;width:1055px;height:769px;margin-left:7px;border:2px solid #a2adb8;border-right-width:3px;border-bottom-width:3px;}
.sql-col{width:268px;display:flex;flex-direction:column;}
.sql-tools{height:39px;display:grid;align-items:center;justify-items:center;grid-template-columns:56px 34px 44px 34px 44px 34px;}
.tool-add{position:relative;width:59px;height:29px;margin-left:-3px;display:flex;align-items:center;justify-content:center;border:2px solid #f5222d;}
.i-del{width:20px;height:20px;}
.sql-list{flex:1;background:#fff;border-left:2px solid #e4e4e6;padding-left:2px;}
.sql-item{display:flex;align-items:center;height:26px;gap:0;margin-top:-1px;}
.sql-name{flex:1;height:26px;line-height:21px;padding-left:1px;background:#3f9bfb;color:#fff;border:2px solid #f5222d;margin-right:-1px;}
.split-col{width:11px;padding-top:4px;display:flex;flex-direction:column;align-items:center;gap:8px;border-right:1px solid #c8c8ca;}
.tri-mini{width:6px;height:10px;}
.form-col{flex:1;min-width:0;padding-top:2px;}
.legend{height:20px;display:flex;align-items:center;line-height:20px;padding-right:4px;}
.legend::before{content:"";width:8px;height:2px;margin-left:3px;background:#e8e8ea;}
.legend::after{content:"";flex:1;height:2px;margin-left:3px;background:#e8e8ea;}
.l2{margin-top:12px;}
.l3{margin-top:7px;}
.l4{margin-top:7px;}
.type-row{display:flex;height:26px;margin-top:4px;padding-left:21px;line-height:26px;}
.type-row label{width:133px;}
.typesel{width:117px;margin-left:-2px;outline:2px solid #f5222d;outline-offset:-1px;line-height:24px;}
.typesel .sel-txt{padding:2px 0 0 12px;overflow:visible;}
.sel.typesel .sel-btn{width:26px;}
.db-line{display:flex;align-items:center;margin-top:3px;}
.db-row{display:flex;height:31px;margin-left:4px;width:666px;border:2px solid #f5222d;line-height:27px;}
.db-row label{flex:none;white-space:nowrap;}
.db-row .sel{width:161px;line-height:25px;}
.db-row .sel-txt{padding-left:4px;}
.lb-db{width:73px;}
.lb-mode{width:64px;padding-left:9px;}
.lb-tbl{width:46px;padding-left:9px;}
.db-row .plainbtn{width:157px;}
.plainbtn .sel-btn{background:#fff;border-left:1px solid #e0e0e2;width:24px;}
.icon-btn{width:35px;height:28px;display:flex;align-items:center;justify-content:center;background:#fff;border:1px solid #e6e6e8;margin-left:10px;}
.icon-btn.first{margin-left:13px;}
.val-block{display:flex;height:446px;margin:2px 0 0 7px;}
.val-left{width:573px;border-right:2px solid #dcdcde;border-bottom:2px solid #dcdcde;}
.val-table{width:572px;height:96px;border:2px solid #f5222d;padding-top:3px;}
.vt-head,.vt-row{display:grid;grid-template-columns:72px 249px 1fr;}
.vt-head{height:29px;line-height:29px;text-align:center;background:#e4e4e4;}
.vt-head span{border-right:2px solid #d0d0d0;}
.vt-row{height:30px;line-height:28px;border-bottom:1px solid #e4e4e6;}
.vt-row.sel-row{background:#c5d9e8;margin-top:1px;}
.vt-row .en{line-height:30px;}
.vt-chk{display:flex;align-items:center;justify-content:center;}
.vt-chk.cur{border:1px solid #aab0d8;}
.vt-c{padding-left:2px;border-left:1px solid #e4e4e6;}
.chk{display:flex;align-items:center;justify-content:center;width:18px;height:18px;background:#fafafa;border:1px solid #8f8f8f;}
.chk svg{width:13px;height:13px;}
.chk.big{width:19px;height:19px;background:#f6f6f6;}
.val-btns{width:183px;margin-left:1px;padding-top:4px;display:flex;flex-direction:column;gap:7px;}
.val-btns button{padding-left:28px;line-height:23px;}
.noupd{display:flex;align-items:center;margin-top:3px;padding-left:6px;height:20px;white-space:nowrap;}
.noupd span{margin-left:6px;}
.help{width:18px;height:18px;margin-left:21px;border-radius:50%;background:#1e8cf0;color:#fff;font-family:"Liberation Sans",sans-serif;font-size:14px;font-weight:bold;line-height:18px;text-align:center;}
.cond{display:flex;height:88px;margin:6px 0 0 7px;}
.cond-box{width:591px;background:#dedee0;}
.cond button{width:164px;}
.evt-btn{display:block;width:137px;margin:14px 0 0 7px;}
.dlg-foot{display:flex;justify-content:flex-end;gap:14px;padding:11px 20px 0 0;}
.dlg-foot button{width:67px;height:28px;}
.dlg-foot .ok{height:25px;margin-top:3px;border:2px solid #f5222d;line-height:21px;}

/* 步骤序号 */
.badge{position:absolute;width:44px;height:44px;border-radius:50%;background:#fb2a33;color:#fff;font-family:"Liberation Sans",sans-serif;font-size:33px;line-height:44px;text-align:center;z-index:7;}
.b1{left:103px;top:47px;}
.b2{left:228px;top:631px;}
.b3{left:458px;top:229px;}
.b4{left:404px;top:306px;}
.b5{left:561px;top:382px;}
.b6{left:920px;top:292px;}
.b7{left:1071px;top:352px;}
.b8{left:1005px;top:560px;}
.b9{left:1359px;top:1043px;}
```
